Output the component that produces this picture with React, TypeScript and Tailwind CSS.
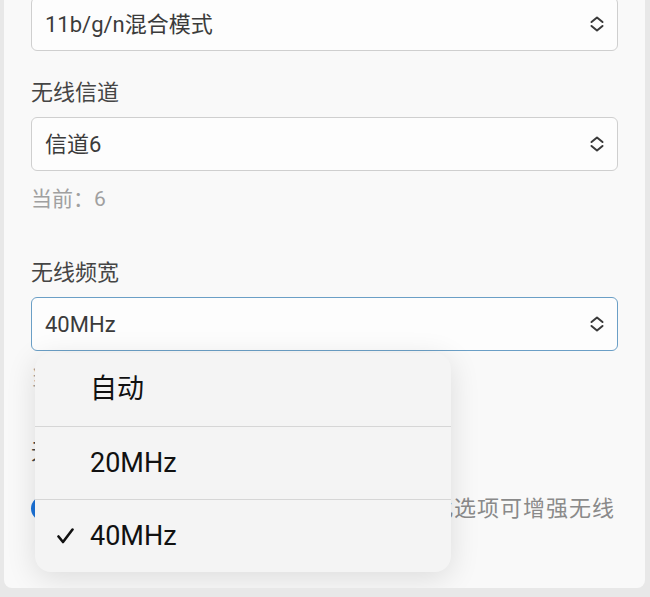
import { useState } from 'react';

const FONT = { fontFamily: 'Roboto, "Noto Sans CJK SC", sans-serif' };

function UpDownIcon() {
  return (
    <svg width="16" height="16" viewBox="0 0 16 16" fill="none" className="shrink-0">
      <path d="M2.5 6 L8 1.5 L13.5 6" stroke="#3a3a3a" strokeWidth="2" strokeLinecap="round" strokeLinejoin="round" />
      <path d="M2.5 10 L8 14.5 L13.5 10" stroke="#3a3a3a" strokeWidth="2" strokeLinecap="round" strokeLinejoin="round" />
    </svg>
  );
}

function Select({ value, focused, className = '' }: { value: string; focused?: boolean; className?: string }) {
  return (
    <div
      className={`h-[54px] flex items-center justify-between rounded-[6px] border bg-[#fdfdfd] pl-[13px] pr-[12px] text-[22px] text-[#3b3b3b] ${
        focused ? 'border-[#6b9fc6]' : 'border-[#cfcfcf]'
      } ${className}`}
    >
      <span>{value}</span>
      <UpDownIcon />
    </div>
  );
}

const options = ['自动', '20MHz', '40MHz'];

export default function App() {
  const [selected] = useState('40MHz');

  return (
    <div className="w-[650px] h-[597px] overflow-hidden bg-[#e8e8e8]" style={FONT}>
      <div className="relative ml-[4px] w-[641px] h-[588px] rounded-b-[8px] bg-[#f9f9f9] px-[27px] overflow-hidden">
        <Select value="11b/g/n混合模式" className="-mt-[3px]" />

        <div className="mt-[29px] h-[26px] leading-[26px] text-[22px] text-[#454545]">无线信道</div>
        <Select value="信道6" className="mt-[11px]" />
        <div className="mt-[15px] h-[26px] leading-[26px] text-[21px] text-[#a0a0a0]">当前：6</div>

        <div className="mt-[48px] h-[26px] leading-[26px] text-[22px] text-[#454545]">无线频宽</div>
        <Select value={selected} focused className="mt-[11px]" />
        <div className="mt-[14px] h-[26px] leading-[26px] text-[21px] text-[#a0a0a0]">当前：40MHz</div>

        <div className="mt-[48px] h-[26px] leading-[26px] text-[22px] text-[#454545]">无线增强</div>
        <div className="mt-[27px] flex items-center gap-3">
          <div className="relative h-[25px] w-[46px] shrink-0 rounded-full bg-[#1b72d8]">
            <div className="absolute right-[2px] top-[2px] h-[21px] w-[21px] rounded-full bg-white" />
          </div>
          <span className="flex-1 text-right pr-[3px] text-[22px] tracking-[1px] text-[#8a8a8a] whitespace-nowrap">开启此选项可增强无线</span>
        </div>

        {/* dropdown menu */}
        <div className="absolute left-[31px] top-[353px] w-[416px] rounded-[16px] bg-[#f4f4f4] shadow-[0_6px_30px_rgba(0,0,0,0.12)] overflow-hidden">
          {options.map((opt, i) => (
            <div
              key={opt}
              className={`relative flex h-[73px] items-center pl-[55px] text-[27px] text-[#111] ${
                i > 0 ? 'border-t border-[#d6d6d6]' : ''
              }`}
            >
              {opt === selected && (
                <svg width="17" height="16" viewBox="0 0 17 16" fill="none" className="absolute left-[22px] top-[28px]">
                  <path d="M1.5 8.5 L6 14 L15.5 1.5" stroke="#111" strokeWidth="2.6" strokeLinecap="round" strokeLinejoin="round" />
                </svg>
              )}
              <span>{opt}</span>
            </div>
          ))}
        </div>
      </div>
    </div>
  );
}
